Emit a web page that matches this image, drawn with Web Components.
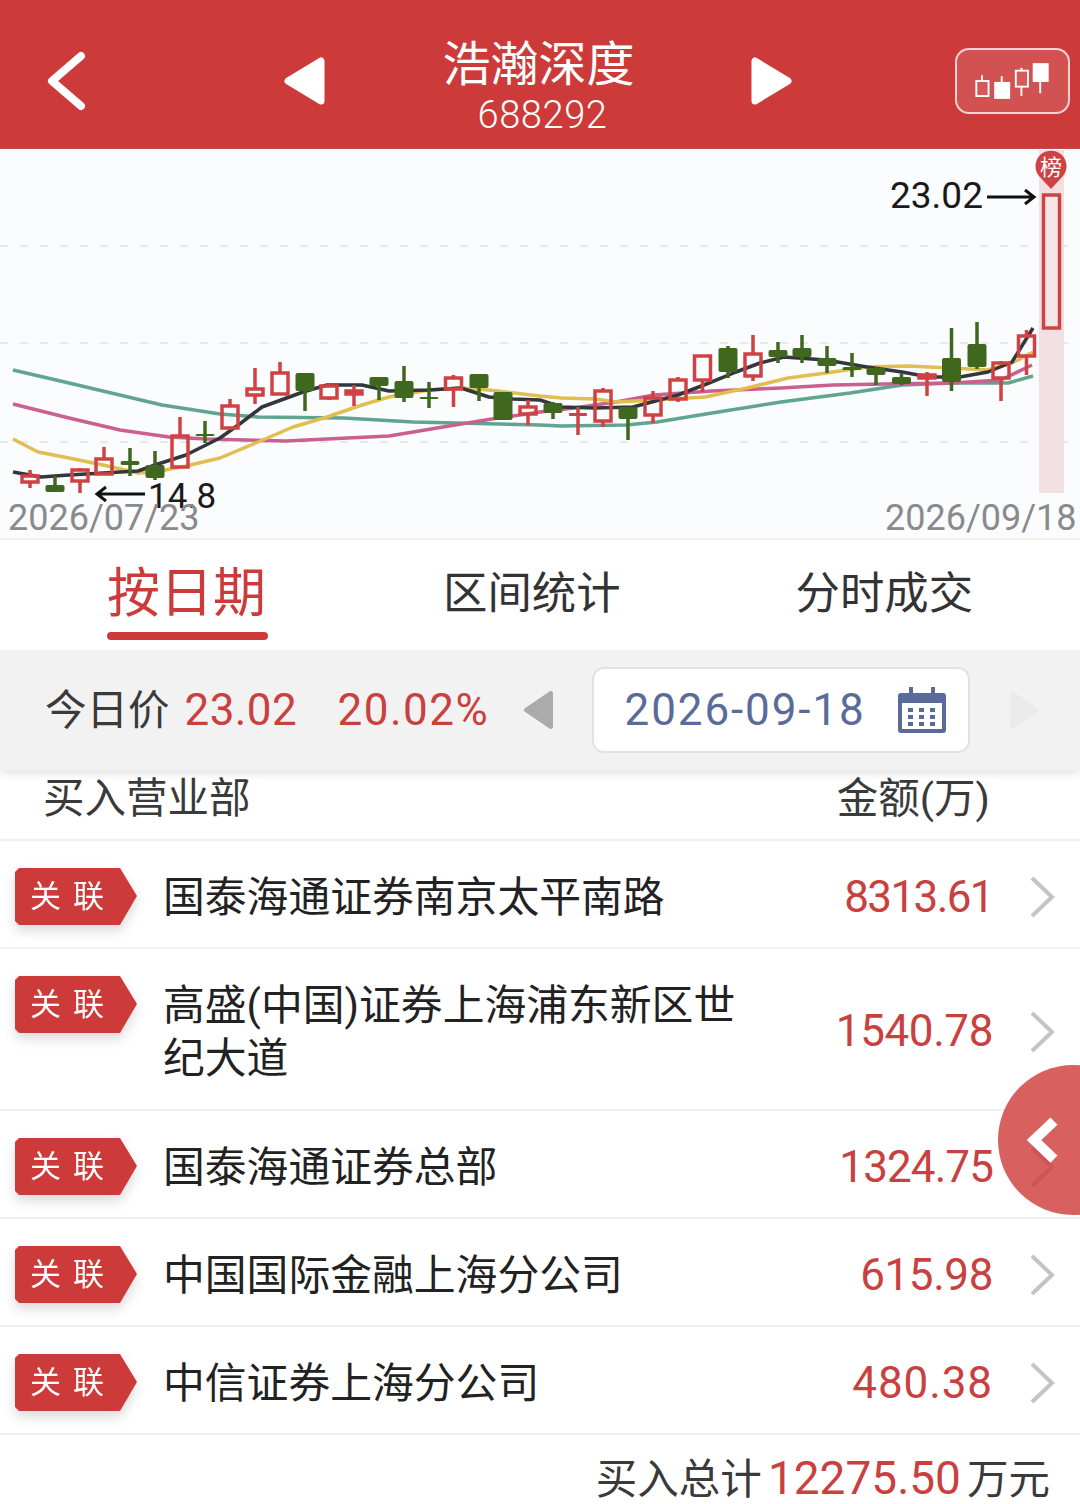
<!DOCTYPE html>
<html lang="zh">
<head>
<meta charset="utf-8">
<title>浩瀚深度</title>
<style>
  html, body { margin: 0; padding: 0; background: #fff; }
  body { width: 1080px; height: 1504px; overflow: hidden; position: relative; font-family: Roboto, "Noto Sans CJK SC", sans-serif; }
</style>
</head>
<body>
<stock-header name="浩瀚深度" code="688292"></stock-header>
<kline-chart></kline-chart>
<tab-bar></tab-bar>
<price-bar></price-bar>
<list-head></list-head>
<broker-row amount="8313.61" style="--sp:-1.6px">国泰海通证券南京太平南路</broker-row>
<broker-row amount="1540.78" style="padding-bottom:22px;--sp:-0.4px">高盛(中国)证券上海浦东新区世纪大道</broker-row>
<broker-row amount="1324.75" style="--sp:-0.9px">国泰海通证券总部</broker-row>
<broker-row amount="615.98" style="--sp:-0.4px">中国国际金融上海分公司</broker-row>
<broker-row amount="480.38" style="--sp:0.9px">中信证券上海分公司</broker-row>
<list-total></list-total>
<float-button></float-button>

<script>
const CJK = `Roboto, "Noto Sans CJK SC", sans-serif`;

class StockHeader extends HTMLElement {
  constructor() {
    super();
    const shadowRoot = this.attachShadow({ mode: "open" });
    shadowRoot.innerHTML = `
    <style>
      :host { display: flex; align-items: center; height: 149px; background: #cc3b3a; color: #fff; font-family: ${CJK}; box-sizing: border-box; padding: 0 10px 0 46px; border-bottom: 1px solid #b9504f; }
      .back { width: 40px; height: 60px; margin-top: 13px; }
      .prev { width: 44px; height: 50px; margin-left: 196px; margin-top: 13px; }
      .title { width: 423px; margin-left: 1px; text-align: center; margin-top: 20px; }
      .name { font-size: 48px; line-height: 58px; margin-top: 4px; }
      .code { font-size: 38px; line-height: 42px; font-weight: 300; letter-spacing: 0.6px; padding-left: 8px; }
      .next { width: 44px; height: 50px; margin-top: 13px; }
      .kline { width: 115px; height: 66px; box-sizing: border-box; margin-left: auto; margin-top: 13px; border: 2px solid rgba(255,255,255,.75); border-radius: 14px; background: rgba(255,255,255,.12); }
      svg { display: block; }
    </style>
    <svg class="back" viewBox="0 0 40 60"><path d="M35 5 L6 30 L35 55" fill="none" stroke="#fff" stroke-width="8" stroke-linecap="round" stroke-linejoin="round"/></svg>
    <svg class="prev" viewBox="0 0 44 50"><path d="M39 5 V45 L6 25 Z" fill="#fff" stroke="#fff" stroke-width="7" stroke-linejoin="round"/></svg>
    <div class="title"><div class="name">${this.getAttribute("name")}</div><div class="code">${this.getAttribute("code")}</div></div>
    <svg class="next" viewBox="0 0 44 50"><path d="M5 5 V45 L38 25 Z" fill="#fff" stroke="#fff" stroke-width="7" stroke-linejoin="round"/></svg>
    <svg class="kline" viewBox="955 48 115 66">
      <g fill="none" stroke="#fff" stroke-width="2">
        <path d="M980 75V98"/><rect x="974" y="81" width="13" height="16" fill="#d65a59"/>
        <path d="M1001 76V84"/><rect x="994" y="83" width="15" height="16" fill="#fff"/>
        <path d="M1022 67V97"/><rect x="1016" y="70" width="13" height="17" fill="#d65a59"/>
        <path d="M1042 80V94"/><rect x="1035" y="63" width="15" height="18" fill="#fff"/>
      </g>
    </svg>`;
  }
}
customElements.define("stock-header", StockHeader);

// x, wick top, wick bottom, body top, body bottom, r/g
const CANDLES = [
  [30,470,488,475,483,"r"],[55,476,492,485,492,"g"],[80,468,493,469,482,"r"],[104,447,475,458,475,"r"],
  [130,448,476,461,465,"g"],[155,451,480,465,478,"g"],[180,417,468,435,468,"r"],[205,421,443,434,436,"g"],
  [230,399,430,405,429,"r"],[255,368,404,388,396,"r"],[280,362,395,372,395,"r"],[305,373,411,373,391,"g"],
  [329,384,400,385,399,"r"],[354,385,406,390,395,"r"],[379,377,400,377,386,"g"],[404,366,402,381,398,"g"],
  [429,382,408,397,399,"g"],[453.5,375,407,377,390,"r"],[479,374,401,374,388,"g"],[503,392,420,392,420,"g"],
  [528,400,425,406,415,"r"],[553,402,419,403,413,"g"],[578,407,435,413,416,"r"],[603,388,427,390,422,"r"],
  [628,407,440,407,419,"g"],[653,391,423,397,416,"r"],[678,377,402,379,400,"r"],[702.5,355,392,355,381,"r"],
  [728,346,378,348,372,"g"],[753,335,381,353,377,"r"],[778,342,363,350,357,"g"],[802,335,363,348,357,"g"],
  [827,346,373,358,366,"g"],[852,353,377,367,370,"g"],[876,367,385,368,375,"g"],[901.5,373,385,377,384,"g"],
  [927,372,396,374,379,"r"],[951.5,328,391,358,382,"g"],[977,322,369,344,367,"g"],[1001,361,401,362,379,"r"],
  [1026.5,330,375,335,357,"r"]
];
const LINES = [
  ["#5fa58f","13,370 69,383 162,405 220,414 258,417 344,418 413,422 540,425 561,426 626,425 657,422 712,413 781,402 850,393 902,385 953,383 1008,383 1033,376"],
  ["#c9608f","13,404 69,418 120,430 169,437 207,439 286,441 389,436 413,432 461,424 492,419 540,412 574,408 616,402 654,395 712,391 781,388 833,385 884,384 953,383 1001,380 1032,365"],
  ["#e0bf50","13,439 38,452 69,458 103,465 138,473 155,472 186,466 220,458 258,442 293,427 327,417 362,405 389,397 429,390 461,388 489,390 540,396 561,398 595,399 616,402 654,400 705,397 747,388 788,378 826,373 867,367 908,366 950,368 988,370 1012,363 1033,352"],
  ["#33363a","13,472 41,477 69,475 103,473 138,471 155,465 186,455 220,438 241,423 262,407 303,392 327,385 362,385 389,391 429,390 461,388 489,397 513,399 540,400 561,407 595,408 633,407 678,395 709,383 736,372 760,363 784,357 826,360 867,367 902,372 929,377 960,377 988,372 1012,362 1033,328"]
];

class KlineChart extends HTMLElement {
  constructor() {
    super();
    const shadowRoot = this.attachShadow({ mode: "open" });
    const lines = LINES.map(l => `<polyline points="${l[1]}" fill="none" stroke="${l[0]}" stroke-width="3.5" stroke-linejoin="round"/>`).join("");
    const candles = CANDLES.map(c => {
      const [x, wt, wb, bt, bb, kind] = c;
      if (kind === "g") {
        return `<path d="M${x} ${wt}V${wb}" stroke="#3f671d" stroke-width="3.5"/><rect x="${x-9.5}" y="${bt}" width="19" height="${bb-bt}" rx="2" fill="#3f671d"/>`;
      }
      const thin = bb - bt < 5;
      return `<path d="M${x} ${wt}V${bt}M${x} ${bb}V${wb}" stroke="#cf4243" stroke-width="3.5"/>` + (thin
        ? `<rect x="${x-9}" y="${bt}" width="18" height="${bb-bt}" rx="1" fill="#cf4243"/>`
        : `<rect x="${x-8}" y="${bt+1}" width="16" height="${bb-bt-2}" fill="none" stroke="#cf4243" stroke-width="3.5"/>`);
    }).join("");
    shadowRoot.innerHTML = `
    <style>
      :host { display: block; height: 391px; background: #fbfcfe; border-bottom: 2px solid #efefef; box-sizing: border-box; overflow: hidden; }
      svg { display: block; }
      text { font-family: Roboto, sans-serif; }
    </style>
    <svg width="1080" height="389" viewBox="0 149 1080 389">
      <g stroke="#e6e8ea" stroke-width="2" stroke-dasharray="8 12">
        <path d="M0 246H1080M0 343H1080M0 442H1080"/>
      </g>
      <rect x="1039" y="150" width="25" height="343" fill="#f2dfe1"/>
      ${lines}
      ${candles}
      <rect x="1043.5" y="195" width="16" height="133" fill="#f6e6e8" stroke="#cf4243" stroke-width="3.5"/>
      <path d="M1051 189 L1039 176 A15.5 15.5 0 1 1 1063 176 Z" fill="#cf4243"/>
      <text x="1051" y="175" font-size="22" fill="#fff" text-anchor="middle" style="font-family:'Noto Sans CJK SC',sans-serif">榜</text>
      <text x="890" y="208" font-size="37" fill="#1a1a1a">23.02</text>
      <path d="M987 197H1033M1025 190L1034 197L1025 204" fill="none" stroke="#111" stroke-width="3"/>
      <path d="M145 494H98M106 487L97 494L106 501" fill="none" stroke="#111" stroke-width="3"/>
      <text x="148" y="508" font-size="35" fill="#1a1a1a">14.8</text>
      <text x="8" y="530" font-size="36" fill="#888a8c">2026/07/23</text>
      <text x="885" y="530" font-size="36" fill="#888a8c">2026/09/18</text>
    </svg>`;
  }
}
customElements.define("kline-chart", KlineChart);

class TabBar extends HTMLElement {
  constructor() {
    super();
    const shadowRoot = this.attachShadow({ mode: "open" });
    shadowRoot.innerHTML = `
    <style>
      :host { display: flex; height: 110px; box-sizing: border-box; padding-left: 107px; font-family: ${CJK}; color: #333; font-size: 44.4px; }
      .tab { line-height: 108px; white-space: nowrap; }
      .on { position: relative; color: #cc3b3a; font-size: 53px; margin-right: 175px; width: 161px; }
      .on::after { content: ""; position: absolute; left: 0; right: 0; top: 92px; height: 8px; border-radius: 4px; background: #cc3b3a; }
      .mid { margin-right: 175px; }
    </style>
    <div class="tab on">按日期</div>
    <div class="tab mid">区间统计</div>
    <div class="tab">分时成交</div>`;
  }
}
customElements.define("tab-bar", TabBar);

class PriceBar extends HTMLElement {
  constructor() {
    super();
    const shadowRoot = this.attachShadow({ mode: "open" });
    shadowRoot.innerHTML = `
    <style>
      :host { display: flex; align-items: center; position: relative; height: 120px; box-sizing: border-box; padding-left: 45px; background: #f2f2f2; box-shadow: 0 4px 8px rgba(0,0,0,.1); font-family: ${CJK}; font-size: 41.5px; color: #3a3a3a; }
      .label { margin-bottom: 6px; }
      .num { color: #c8413f; font-size: 44px; }
      .price { margin-left: 15px; width: 153px; letter-spacing: .4px; }
      .pct { width: 184px; letter-spacing: 1.5px; }
      .date { width: 378px; height: 86px; box-sizing: border-box; display: flex; align-items: center; background: #fff; border: 2px solid #e2e2e2; border-radius: 12px; padding-left: 31px; color: #5b6b99; font-size: 44px; }
      .date span { width: 272px; letter-spacing: 1.9px; }
      svg { display: block; flex: none; }
    </style>
    <span class="label">今日价</span>
    <span class="num price">23.02</span>
    <span class="num pct">20.02%</span>
    <svg width="32" height="42" viewBox="0 0 32 42" style="margin-right:38px"><path d="M29 4V38L4 21Z" fill="#ababab" stroke="#ababab" stroke-width="4" stroke-linejoin="round"/></svg>
    <div class="date"><span>2026-09-18</span>
      <svg width="50" height="46" viewBox="0 0 50 46">
        <rect x="1" y="6" width="48" height="40" rx="3" fill="#5b6b99"/>
        <rect x="5" y="16" width="40" height="26" fill="#fff"/>
        <path d="M14 0V10M36 0V10" stroke="#5b6b99" stroke-width="4"/>
        <g fill="#5b6b99">
          <rect x="11" y="21" width="5" height="4"/><rect x="22" y="21" width="5" height="4"/><rect x="33" y="21" width="5" height="4"/>
          <rect x="11" y="28" width="5" height="4"/><rect x="22" y="28" width="5" height="4"/><rect x="33" y="28" width="5" height="4"/>
          <rect x="11" y="35" width="5" height="4"/><rect x="22" y="35" width="5" height="4"/><rect x="33" y="35" width="5" height="4"/>
        </g>
      </svg>
    </div>
    <svg width="32" height="42" viewBox="0 0 32 42" style="margin-left:39px"><path d="M3 4V38L28 21Z" fill="#ebebeb" stroke="#ebebeb" stroke-width="4" stroke-linejoin="round"/></svg>`;
  }
}
customElements.define("price-bar", PriceBar);

class ListHead extends HTMLElement {
  constructor() {
    super();
    const shadowRoot = this.attachShadow({ mode: "open" });
    shadowRoot.innerHTML = `
    <style>
      :host { display: flex; justify-content: space-between; height: 71px; box-sizing: border-box; padding: 0 90px 0 43px; border-bottom: 2px solid #f0f0f0; font-family: ${CJK}; font-size: 41.5px; line-height: 58px; color: #3a3a3a; }
    </style>
    <span>买入营业部</span><span>金额(万)</span>`;
  }
}
customElements.define("list-head", ListHead);

class BrokerRow extends HTMLElement {
  constructor() {
    super();
    const shadowRoot = this.attachShadow({ mode: "open" });
    shadowRoot.innerHTML = `
    <style>
      :host { display: flex; align-items: center; box-sizing: border-box; padding: 27px 0 21px 15px; border-bottom: 2px solid #f0f0f0; font-family: ${CJK}; position: relative; }
      .badge { align-self: flex-start; flex: none; width: 122px; height: 57px; filter: drop-shadow(0 6px 6px rgba(0,0,0,.14)); }
      .badge div { width: 100%; height: 100%; background: #cc3b3a; color: #fff; font-size: 31px; line-height: 58px; padding-left: 15px; box-sizing: border-box; letter-spacing: 12px; white-space: nowrap; clip-path: polygon(4px 0, 105px 0, 122px 28px, 105px 57px, 4px 57px, 0 53px, 0 4px); }
      .name { width: 590px; margin-left: 26px; padding: 3px 0 2px; font-size: 41.8px; line-height: 53px; color: #222; }
      .amount { flex: 1; text-align: right; color: #c8413f; font-size: 44px; line-height: 53px; letter-spacing: var(--sp, 0); }
      svg { flex: none; display: block; margin: 0 25px 0 36px; }
    </style>
    <div class="badge"><div>关联</div></div>
    <div class="name"><slot></slot></div>
    <div class="amount">${this.getAttribute("amount")}</div>
    <svg width="26" height="44" viewBox="0 0 26 44"><path d="M3 3L23 22L3 41" fill="none" stroke="#c4c4c4" stroke-width="4"/></svg>`;
  }
}
customElements.define("broker-row", BrokerRow);

class ListTotal extends HTMLElement {
  constructor() {
    super();
    const shadowRoot = this.attachShadow({ mode: "open" });
    shadowRoot.innerHTML = `
    <style>
      :host { display: flex; justify-content: flex-end; align-items: baseline; padding-right: 30px; font-family: ${CJK}; font-size: 41.5px; line-height: 86px; color: #3a3a3a; white-space: nowrap; }
      b { font-weight: 400; color: #c8413f; font-size: 46px; margin: 0 6px 0 6px; }
    </style>
    <span>买入总计</span><b>12275.50</b><span>万元</span>`;
  }
}
customElements.define("list-total", ListTotal);

class FloatButton extends HTMLElement {
  constructor() {
    super();
    const shadowRoot = this.attachShadow({ mode: "open" });
    shadowRoot.innerHTML = `
    <style>
      :host { position: absolute; left: 998px; top: 1065px; width: 82px; height: 150px; overflow: hidden; }
      div { width: 150px; height: 150px; border-radius: 50%; background: rgba(207,62,61,.82); display: flex; align-items: center; }
      svg { display: block; margin-left: 28px; }
    </style>
    <div><svg width="34" height="48" viewBox="0 0 34 48"><path d="M28 5L8 24L28 43" fill="none" stroke="#fff" stroke-width="10"/></svg></div>`;
  }
}
customElements.define("float-button", FloatButton);
</script>
</body>
</html>
